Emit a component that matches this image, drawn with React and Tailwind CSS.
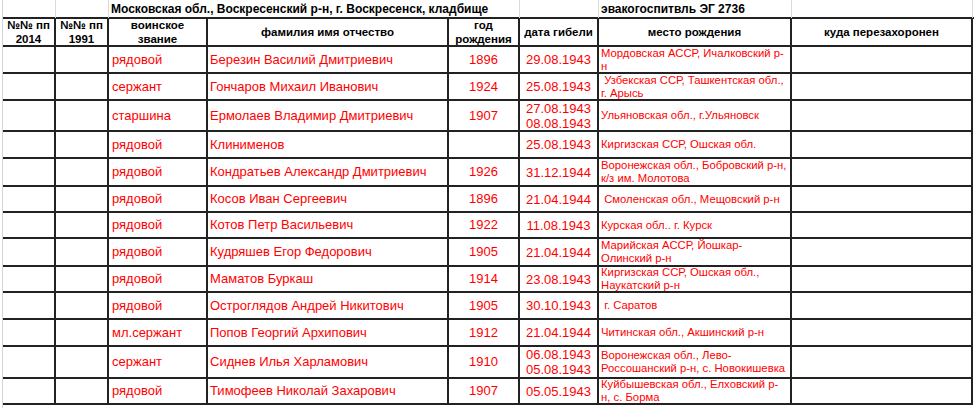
import React from 'react';

const COLS = 'grid-cols-[53px_53px_99px_241px_71px_79px_193px_181px]';

const ROWS = [
  { rank: 'рядовой', name: 'Березин Василий Дмитриевич', year: '1896', date: ['29.08.1943'], place: ['Мордовская АССР, Ичалковский р-', 'н'], h: 'h-[27px]' },
  { rank: 'сержант', name: 'Гончаров Михаил Иванович', year: '1924', date: ['25.08.1943'], place: [' Узбекская ССР, Ташкентская обл.,', 'г. Арысь'], h: 'h-[27px]' },
  { rank: 'старшина', name: 'Ермолаев Владимир Дмитриевич', year: '1907', date: ['27.08.1943', '08.08.1943'], place: ['Ульяновская обл., г.Ульяновск'], h: 'h-[31px]' },
  { rank: 'рядовой', name: 'Клинименов', year: '', date: ['25.08.1943'], place: ['Киргизская ССР, Ошская обл.'], h: 'h-[27px]' },
  { rank: 'рядовой', name: 'Кондратьев Александр Дмитриевич', year: '1926', date: ['31.12.1944'], place: ['Воронежская обл., Бобровский р-н,', 'к/з им. Молотова'], h: 'h-[28px]' },
  { rank: 'рядовой', name: 'Косов Иван Сергеевич', year: '1896', date: ['21.04.1944'], place: [' Смоленская обл., Мещовский р-н'], h: 'h-[26px]' },
  { rank: 'рядовой', name: 'Котов Петр Васильевич', year: '1922', date: ['11.08.1943'], place: ['Курская обл.. г. Курск'], h: 'h-[26px]' },
  { rank: 'рядовой', name: 'Кудряшев Егор Федорович', year: '1905', date: ['21.04.1944'], place: ['Марийская АССР, Йошкар-', 'Олинский р-н'], h: 'h-[28px]' },
  { rank: 'рядовой', name: 'Маматов Буркаш', year: '1914', date: ['23.08.1943'], place: ['Киргизская ССР, Ошская обл.,', 'Наукатский р-н'], h: 'h-[26px]' },
  { rank: 'рядовой', name: 'Остроглядов Андрей Никитович', year: '1905', date: ['30.10.1943'], place: [' г. Саратов'], h: 'h-[27px]' },
  { rank: 'мл.сержант', name: 'Попов Георгий Архипович', year: '1912', date: ['21.04.1944'], place: ['Читинская обл., Акшинский р-н'], h: 'h-[27px]' },
  { rank: 'сержант', name: 'Сиднев Илья Харламович', year: '1910', date: ['06.08.1943', '05.08.1943'], place: ['Воронежская обл., Лево-', 'Россошанский р-н, с. Новокишевка'], h: 'h-[32px]' },
  { rank: 'рядовой', name: 'Тимофеев Николай Захарович', year: '1907', date: ['05.05.1943'], place: ['Куйбышевская обл., Елховский р-', 'н, с. Борма'], h: 'h-[26px]' },
];

const HEADERS = [
  ['№№ пп', '2014'],
  ['№№ пп', '1991'],
  ['воинское', 'звание'],
  ['фамилия имя отчество'],
  ['год', 'рождения'],
  ['дата гибели'],
  ['место рождения'],
  ['куда перезахоронен'],
];

const cell = 'border-r-2 border-b-2 border-[#222] flex items-center overflow-hidden';

export default function App() {
  return (
    <div
      className="w-[974px] h-[408px] overflow-hidden bg-white text-black"
      style={{ fontFamily: '"Liberation Sans", Arial, sans-serif' }}
    >
      <div className="ml-[2px] border-l border-[#d4d4d4] h-full">
        {/* строка заголовка */}
        <div className={`grid ${COLS} h-[17px] text-[12px] font-bold`}>
          <div className="border-r border-[#dadada]" />
          <div className="border-r border-[#dadada]" />
          <div className="col-span-3 border-r border-[#dadada] pl-[2px] flex items-center whitespace-nowrap">
            Московская обл., Воскресенский р-н, г. Воскресенск, кладбище
          </div>
          <div className="border-r border-[#dadada]" />
          <div className="border-r border-[#dadada] pl-[2px] flex items-center whitespace-nowrap">
            эвакогоспитвль ЭГ 2736
          </div>
          <div className="border-r border-[#dadada]" />
        </div>

        <div className={`grid ${COLS} border-t-2 border-[#222]`}>
          {HEADERS.map((lines, i) => (
            <div
              key={i}
              className={`${cell} h-[28px] justify-center text-center text-[11.5px] font-bold leading-[14px]`}
            >
              <div>
                {lines.map((l, j) => (
                  <div key={j} className="whitespace-nowrap">{l}</div>
                ))}
              </div>
            </div>
          ))}

          {ROWS.map((r, i) => (
            <React.Fragment key={i}>
              <div className={`${cell} ${r.h}`} />
              <div className={`${cell} ${r.h}`} />
              <div className={`${cell} ${r.h} px-[3px] text-[13px] text-[#ff0000] whitespace-nowrap`}>{r.rank}</div>
              <div className={`${cell} ${r.h} px-[2px] text-[13px] text-[#ff0000] whitespace-nowrap`}>{r.name}</div>
              <div className={`${cell} ${r.h} justify-center text-[13px] text-[#ff0000]`}>{r.year}</div>
              <div className={`${cell} ${r.h} justify-center text-center text-[13px] leading-[15px] text-[#ff0000]`}>
                <div>
                  {r.date.map((d, j) => (
                    <div key={j}>{d}</div>
                  ))}
                </div>
              </div>
              <div className={`${cell} ${r.h} pl-[2px] text-[11.3px] leading-[13px] text-[#ff0000] whitespace-pre`}>
                <div>
                  {r.place.map((p, j) => (
                    <div key={j}>{p}</div>
                  ))}
                </div>
              </div>
              <div className={`${cell} ${r.h}`} />
            </React.Fragment>
          ))}
        </div>
      </div>
    </div>
  );
}
